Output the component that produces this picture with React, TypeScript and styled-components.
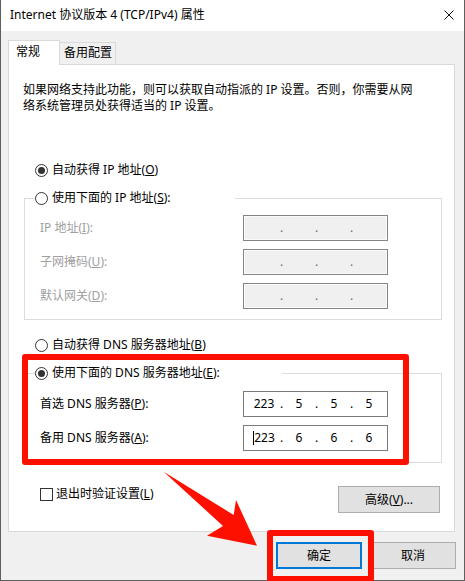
import React from "react";
import styled, { createGlobalStyle } from "styled-components";

const GlobalStyle = createGlobalStyle`
  html, body {
    margin: 0;
    padding: 0;
    background: #ffffff;
  }
  body {
    width: 465px;
    height: 581px;
    overflow: hidden;
    font-family: "Noto Sans", "Noto Sans CJK SC", sans-serif;
    font-size: 12px;
    line-height: 16px;
    color: #000;
  }
`;

const RED = "#fe1000";

const App: React.FC = () => {
  return (
    <>
      <GlobalStyle />
      <Window>
        <TitleBar>
          <Title>Internet 协议版本 4 (TCP/IPv4) 属性</Title>
          <CloseButton>
            <svg width="10" height="10" viewBox="0 0 10 10">
              <path d="M0.5 0.5 L9.5 9.5 M9.5 0.5 L0.5 9.5" stroke="#111" strokeWidth="1" />
            </svg>
          </CloseButton>
        </TitleBar>

        <Body>
          <TabRow>
            <Tab $active>常规</Tab>
            <Tab>备用配置</Tab>
          </TabRow>

          <Panel>
            <Description>
              如果网络支持此功能，则可以获取自动指派的 IP 设置。否则，你需要从网
              <br />
              络系统管理员处获得适当的 IP 设置。
            </Description>

            <RadioRow $top={48}>
              <Radio $checked />
              <span>
                自动获得 IP 地址(<u>O</u>)
              </span>
            </RadioRow>

            <Group>
              <Legend $width={200}>
                <Radio />
                <span>
                  使用下面的 IP 地址(<u>S</u>):
                </span>
              </Legend>
              <FieldRows>
                <FieldLabel $disabled>
                  IP 地址(<u>I</u>):
                </FieldLabel>
                <IpField values={[]} disabled />
                <FieldLabel $disabled>
                  子网掩码(<u>U</u>):
                </FieldLabel>
                <IpField values={[]} disabled />
                <FieldLabel $disabled>
                  默认网关(<u>D</u>):
                </FieldLabel>
                <IpField values={[]} disabled />
              </FieldRows>
            </Group>

            <RadioRow $top={17}>
              <Radio />
              <span>
                自动获得 DNS 服务器地址(<u>B</u>)
              </span>
            </RadioRow>

            <Group>
              <Legend $width={247}>
                <Radio $checked />
                <span>
                  使用下面的 DNS 服务器地址(<u>E</u>):
                </span>
              </Legend>
              <FieldRows $padTop={10} $padBottom={11}>
                <FieldLabel>
                  首选 DNS 服务器(<u>P</u>):
                </FieldLabel>
                <IpField values={["223", "5", "5", "5"]} />
                <FieldLabel>
                  备用 DNS 服务器(<u>A</u>):
                </FieldLabel>
                <IpField values={["223", "6", "6", "6"]} caret />
              </FieldRows>
            </Group>

            <BottomRow>
              <CheckRow>
                <CheckBox />
                <span>
                  退出时验证设置(<u>L</u>)
                </span>
              </CheckRow>
              <Button $width={102}>
                高级(<u>V</u>)...
              </Button>
            </BottomRow>
          </Panel>

          <DialogButtons>
            <Button $width={86} $default>
              确定
            </Button>
            <Button $width={86}>取消</Button>
          </DialogButtons>
        </Body>

        {/* annotations drawn over the dialog */}
        <Highlight style={{ left: 21, top: 354, width: 387, height: 111 }} />
        <Highlight style={{ left: 266, top: 530, width: 107, height: 52 }} />
        <Arrow width="120" height="90" viewBox="0 0 120 90">
          <polygon
            points="12.7,6.7 82.7,50 85,35 106,80.7 56,70.7 72,61"
            fill={RED}
          />
        </Arrow>
      </Window>
    </>
  );
};

export default App;

type IpFieldProps = {
  values: string[];
  disabled?: boolean;
  caret?: boolean;
};

const IpField: React.FC<IpFieldProps> = ({ values, disabled, caret }) => {
  const parts = [0, 1, 2, 3];
  return (
    <FieldBox $disabled={disabled}>
      {parts.map((i) => (
        <React.Fragment key={i}>
          <Octet>
            {caret && i === 0 && <Caret />}
            {values[i] ?? ""}
          </Octet>
          {i < 3 && <Dot $disabled={disabled}>.</Dot>}
        </React.Fragment>
      ))}
    </FieldBox>
  );
};

// Styled Components
const Window = styled.div`
  position: relative;
  width: 465px;
  height: 581px;
  box-sizing: border-box;
  border: 1px solid #5f5f5f;
  border-top: none;
  display: flex;
  flex-direction: column;
  background: #f0f0f0;
`;

const TitleBar = styled.div`
  height: 31px;
  background: #ffffff;
  display: flex;
  align-items: center;
  justify-content: space-between;
  padding: 0 10px 0 9px;
  flex-shrink: 0;
`;

const Title = styled.div`
  font-size: 12px;
  color: #000;
  margin-top: -1px;
`;

const CloseButton = styled.div`
  display: flex;
  align-items: center;
  margin-top: -1px;
`;

const Body = styled.div`
  flex: 1;
  padding: 9px 9px 0 7px;
  display: flex;
  flex-direction: column;
`;

const TabRow = styled.div`
  display: flex;
  align-items: flex-end;
  position: relative;
  z-index: 1;
  margin-bottom: -1px;
  height: 25px;
`;

const Tab = styled.div<{ $active?: boolean }>`
  box-sizing: border-box;
  border: 1px solid #d9d9d9;
  background: ${(p) => (p.$active ? "#ffffff" : "#f0f0f0")};
  height: ${(p) => (p.$active ? "25px" : "23px")};
  width: ${(p) => (p.$active ? "52px" : "56px")};
  border-bottom: ${(p) => (p.$active ? "none" : "1px solid #d9d9d9")};
  border-left: ${(p) => (p.$active ? "1px solid #d9d9d9" : "none")};
  padding: ${(p) => (p.$active ? "3px 0 0 7px" : "2px 0 0 4px")};
  white-space: nowrap;
`;

const Panel = styled.div`
  box-sizing: border-box;
  height: 468px;
  background: #ffffff;
  border: 1px solid #d9d9d9;
  padding: 0 0 0 14px;
  display: flex;
  flex-direction: column;
`;

const Description = styled.div`
  margin-top: 17px;
  white-space: nowrap;
`;

const RadioRow = styled.div<{ $top: number }>`
  display: flex;
  align-items: center;
  margin-top: ${(p) => p.$top}px;
  margin-left: 12px;
  height: 16px;
  white-space: nowrap;
`;

const Radio = styled.span<{ $checked?: boolean }>`
  box-sizing: border-box;
  width: 13px;
  height: 13px;
  border: 1px solid #333;
  border-radius: 50%;
  background: #fff;
  display: inline-flex;
  align-items: center;
  justify-content: center;
  margin-right: 4px;
  flex-shrink: 0;

  &::after {
    content: "";
    display: ${(p) => (p.$checked ? "block" : "none")};
    width: 7px;
    height: 7px;
    border-radius: 50%;
    background: #333;
  }
`;

const Group = styled.fieldset`
  margin: 12px 0 0 1px;
  padding: 0;
  width: 418px;
  box-sizing: border-box;
  border: 1px solid #dcdcdc;
  min-width: 0;
`;

const Legend = styled.legend<{ $width: number }>`
  display: flex;
  align-items: center;
  margin-left: 10px;
  padding: 0;
  width: ${(p) => p.$width}px;
  height: 16px;
  white-space: nowrap;
  background: #fff;
`;

const FieldRows = styled.div<{ $padTop?: number; $padBottom?: number }>`
  display: grid;
  grid-template-columns: 203px 145px;
  row-gap: 8px;
  align-items: center;
  padding: ${(p) => p.$padTop ?? 9}px 0 ${(p) => p.$padBottom ?? 10}px 15px;
`;

const FieldLabel = styled.div<{ $disabled?: boolean }>`
  color: ${(p) => (p.$disabled ? "#a0a0a0" : "#000")};
  white-space: nowrap;
`;

const FieldBox = styled.div<{ $disabled?: boolean }>`
  box-sizing: border-box;
  height: 26px;
  width: 145px;
  border: 1px solid ${(p) => (p.$disabled ? "#858585" : "#7a7a7a")};
  background: ${(p) => (p.$disabled ? "#f0f0f0" : "#ffffff")};
  box-shadow: ${(p) => (p.$disabled ? "inset 0 0 0 1px #fafafa" : "none")};
  display: flex;
  align-items: center;
  padding-left: 5px;
`;

const Octet = styled.span`
  width: 30px;
  text-align: center;
  display: inline-flex;
  justify-content: center;
  align-items: center;
`;

const Dot = styled.span<{ $disabled?: boolean }>`
  width: 5px;
  text-align: center;
  color: ${(p) => (p.$disabled ? "#6d6d6d" : "#000")};
`;

const Caret = styled.span`
  display: inline-block;
  width: 1px;
  height: 14px;
  background: #000;
`;

const BottomRow = styled.div`
  display: flex;
  justify-content: space-between;
  align-items: flex-start;
  margin-top: 23px;
  width: 417px;
`;

const CheckRow = styled.div`
  display: flex;
  align-items: center;
  margin-left: 17px;
  height: 16px;
  white-space: nowrap;
`;

const CheckBox = styled.span`
  box-sizing: border-box;
  width: 13px;
  height: 13px;
  border: 1px solid #333;
  background: #fff;
  margin-right: 3px;
`;

const Button = styled.div<{ $width: number; $default?: boolean }>`
  box-sizing: border-box;
  width: ${(p) => p.$width}px;
  height: 27px;
  background: #e1e1e1;
  border: ${(p) => (p.$default ? "2px solid #0078d7" : "1px solid #adadad")};
  display: flex;
  align-items: center;
  justify-content: center;
  white-space: nowrap;
`;

const DialogButtons = styled.div`
  display: flex;
  justify-content: flex-end;
  gap: 8px;
  margin-top: 10px;
  margin-right: -1px;
`;

const Highlight = styled.div`
  position: absolute;
  box-sizing: border-box;
  border: 6px solid ${RED};
  border-radius: 3px;
  pointer-events: none;
`;

const Arrow = styled.svg`
  position: absolute;
  left: 150px;
  top: 465px;
`;
